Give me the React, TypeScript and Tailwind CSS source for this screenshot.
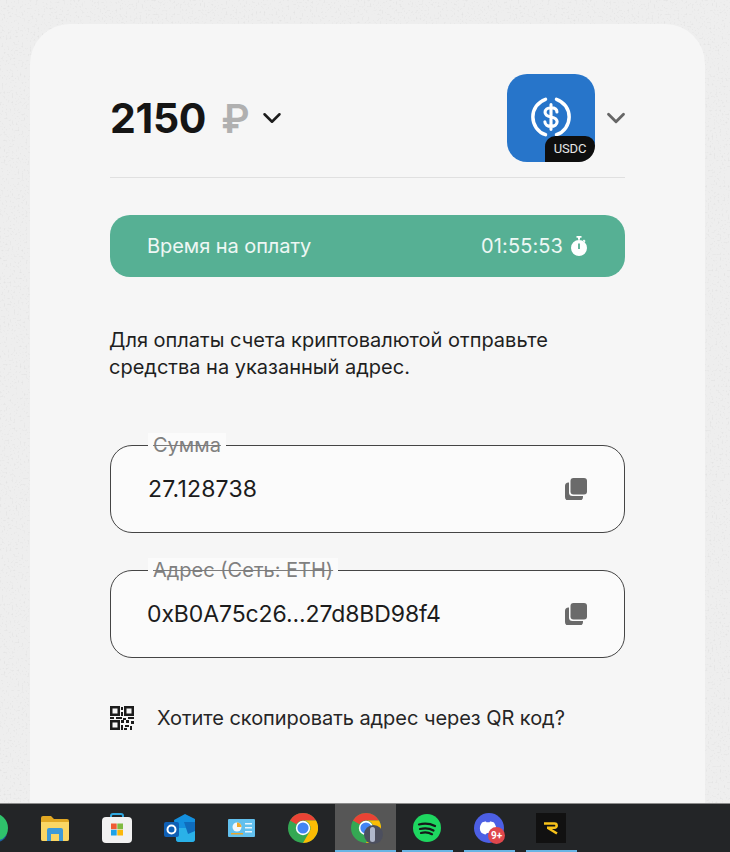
import React from "react";

const Chevron = ({ color, w, sw }: { color: string; w: number; sw: number }) => (
  <svg width={w} height={w} viewBox="0 0 24 24" fill="none" stroke={color} strokeWidth={sw} strokeLinecap="round" strokeLinejoin="round">
    <path d="M3 7.5 12 16.5 21 7.5" />
  </svg>
);

const CopyIcon = () => (
  <svg width="22" height="22" viewBox="0 0 22 22" className="shrink-0">
    <rect x="0" y="4.5" width="18" height="18" rx="3.5" fill="#6a6a6a" />
    <rect x="4" y="-1" width="19" height="19" rx="3.5" fill="#fbfbfb" />
    <rect x="5.5" y="0" width="16.5" height="16.5" rx="3" fill="#6a6a6a" />
  </svg>
);

const Qr = () => (
  <svg width="24" height="24" viewBox="0 0 24 24" fill="#1c1c1c" className="shrink-0">
    <path fillRule="evenodd" d="M0 0h10v10H0zM2.500 2.500v5h5v-5zM14 0h10v10H14zM16.500 2.500v5h5v-5zM0 14h10v10H0zM2.500 16.500v5h5v-5z" />
    <path d="M11 1h2v3h-2zM11 6h2v4h-2zM0 11h4v2H0zM6 11h6v2H6zM13 12h3v2h-3zM18 11h6v2h-6zM11 14h3v3h-3zM16 14h3v3h-3zM21 15h3v3h-3zM11 19h2v5h-2zM15 19h4v2h-4zM14 22h3v2h-3zM20 20h2v4h-2z" />
  </svg>
);

const Field = ({ label, value, track }: { label: string; value: string; track: string }) => (
  <div className="relative h-[88px] rounded-[22px] border border-[#454545] bg-[#fbfbfb] flex items-center justify-between pl-[37px] pr-[37px]">
    <span className={`text-[23px] text-[#1c1c1c] ${track}`}>{value}</span>
    <CopyIcon />
    <span className="absolute left-[37px] -top-[13px] h-[25px] px-[5px] bg-[#fbfbfb] text-[20px] leading-[25px] text-[#808080] line-through decoration-[#7c7c7c] decoration-1">
      {label}
    </span>
  </div>
);

const Chrome = () => (
  <svg width="30" height="30" viewBox="0 0 30 30">
    <circle cx="15" cy="15" r="15" fill="#34a853" />
    <path d="M15 0a15 15 0 0 1 13 7.5H15a7.5 7.5 0 0 0-6.5 3.75L2 7.5A15 15 0 0 1 15 0z" fill="#ea4335" />
    <path d="M28 7.5A15 15 0 0 1 15 30l6.5-11.25A7.5 7.5 0 0 0 15 7.5z" fill="#fbbc04" />
    <circle cx="15" cy="15" r="7.2" fill="#fff" />
    <circle cx="15" cy="15" r="5.6" fill="#4285f4" />
  </svg>
);

const TaskIcon = ({ children, active, bar }: { children: React.ReactNode; active?: boolean; bar?: boolean }) => (
  <div className={`relative h-full shrink-0 flex items-center justify-center ${active ? "ml-[1px] w-[61px] bg-[#565656]" : "w-[62px]"}`}>
    {children}
    {bar && (
      <span className={`absolute bottom-0 h-[2px] bg-[#69b4e4] ${active ? "left-0 right-0" : "left-[6px] right-[5px]"}`} />
    )}
  </div>
);

export default function App() {
  return (
    <div className="relative w-[730px] h-[852px] overflow-hidden flex flex-col bg-[#eeeeee] font-['Inter',sans-serif]">
      <svg className="absolute inset-0 w-full h-full" aria-hidden="true">
        <filter id="speckle">
          <feTurbulence type="fractalNoise" baseFrequency="0.5" numOctaves="2" seed="4" />
          <feColorMatrix values="0 0 0 0 0.6  0 0 0 0 0.6  0 0 0 0 0.6  3 0 0 0 -1.7" />
        </filter>
        <rect width="100%" height="100%" filter="url(#speckle)" opacity="0.4" />
      </svg>

      <main className="relative flex-1 min-h-0 pt-[24px] pl-[30px] pr-[25px]">
        <div className="h-full rounded-t-[40px] bg-[#f6f6f6] px-[80px] pt-[50px]">
          <header className="flex items-center justify-between h-[104px] pb-[15px] border-b border-[#e0e0e0]">
            <div className="flex items-center">
              <span className="text-[41px] font-bold leading-none text-[#151515] tracking-[-0.3px]">2150</span>
              <span className="ml-[15px] text-[39px] font-semibold leading-none text-[#b0b0b0]">₽</span>
              <span className="ml-[12px] flex"><Chevron color="#1c1c1c" w={20} sw={3} /></span>
            </div>
            <div className="flex items-center -mr-[1px]">
              <div className="relative w-[88px] h-[88px] rounded-[20px] bg-[#2775ca] flex items-center justify-center">
                <svg width="42" height="42" viewBox="0 0 46 46" fill="none" stroke="#fff" className="mb-[3px]">
                  <path d="M17 3.6A20.5 20.5 0 0 0 17 42.4M29 3.6A20.5 20.5 0 0 1 29 42.4" strokeWidth="3.8" strokeLinecap="round" />
                  <path d="M29.5 17.5c0-3-2.7-4.700-6.500-4.700s-6.500 1.900-6.500 5c0 3.500 3 4.500 6.500 5.200s6.700 1.800 6.700 5.300c0 3.100-2.900 5-6.700 5s-6.700-1.900-6.700-5M23 9.500v27" strokeWidth="3.4" strokeLinecap="round" />
                </svg>
                <span className="absolute right-0 bottom-0 w-[50px] h-[26px] rounded-tl-[13px] rounded-br-[20px] rounded-tr-[12px] bg-[#0e0e0e] text-white/90 text-[13px] leading-[26px] text-center font-['Roboto',sans-serif] tracking-[-0.1px]">
                  USDC
                </span>
              </div>
              <span className="ml-[11px] flex"><Chevron color="#666666" w={20} sw={3.4} /></span>
            </div>
          </header>

          <div className="mt-[37px] h-[62px] rounded-[20px] bg-[#56b094] flex items-center justify-between pl-[37px] pr-[38px] text-white/90 text-[20px]">
            <span className="tracking-[-0.06px]">Время на оплату</span>
            <span className="flex items-center gap-[8px]">
              <span className="tracking-[0.1px]">01:55:53</span>
              <svg width="16" height="20" viewBox="0 0 16 20" fill="#fff">
                <path d="M5.5 0h5v1.800H9v2H7v-2H5.500z" />
                <path d="m13 3.600 1.600 1.500-1.200 1.200-1.600-1.500z" />
                <path fillRule="evenodd" d="M8 4a8 8 0 1 1 0 16A8 8 0 0 1 8 4zm-.9 3.500V13h1.800V7.500z" />
              </svg>
            </span>
          </div>

          <p className="mt-[50px] -ml-[1px] text-[20px] leading-[27px] text-[#1f1f1f]">
            Для оплаты счета криптовалютой отправьте<br />средства на указанный адрес.
          </p>

          <div className="mt-[64px] flex flex-col gap-[37px]">
            <Field label="Сумма" value="27.128738" track="tracking-[0.2px]" />
            <Field label="Адрес (Сеть: ETH)" value="0xB0A75c26...27d8BD98f4" track="tracking-[-0.1px] -ml-[1px]" />
          </div>

          <div className="mt-[45px] flex items-center gap-[23px]">
            <Qr />
            <span className="text-[20px] text-[#262626] tracking-[-0.05px]">Хотите скопировать адрес через QR код?</span>
          </div>
        </div>
      </main>

      <footer className="relative h-[49px] shrink-0 bg-[#232527] border-t border-[#8c8c8c] flex items-center pl-[24px] overflow-hidden">
        <svg width="30" height="30" viewBox="0 0 30 30" className="absolute -left-[22px] top-[9px]">
          <circle cx="15" cy="15" r="15" fill="#2fc26b" />
          <path d="M20 27c3 0 6-1 9-6-1 5-7 9-14 9z" fill="#1b5fa8" />
        </svg>
        <TaskIcon>
          <svg width="28" height="26" viewBox="0 0 28 26">
            <path d="M0 3a2 2 0 0 1 2-2h8l3 3h13a2 2 0 0 1 2 2v18a2 2 0 0 1-2 2H2a2 2 0 0 1-2-2z" fill="#e2a823" />
            <path d="M0 7h28v17a2 2 0 0 1-2 2H2a2 2 0 0 1-2-2z" fill="#fbd664" />
            <path d="M6 15a2 2 0 0 1 2-2h12a2 2 0 0 1 2 2v11h-4v-7h-8v7H6z" fill="#3e9ad8" />
          </svg>
        </TaskIcon>
        <TaskIcon>
          <svg width="30" height="30" viewBox="0 0 30 30">
            <path d="M9 7V3a2 2 0 0 1 2-2h8a2 2 0 0 1 2 2v4" fill="none" stroke="#2fa8e0" strokeWidth="2" />
            <rect y="4" width="30" height="26" rx="4" fill="#f1f1f1" />
            <rect x="9" y="10.500" width="5.700" height="5.700" fill="#ef5a33" />
            <rect x="15.300" y="10.500" width="5.700" height="5.700" fill="#7fbb42" />
            <rect x="9" y="16.800" width="5.700" height="5.700" fill="#1fa3e8" />
            <rect x="15.300" y="16.800" width="5.700" height="5.700" fill="#fbb80a" />
          </svg>
        </TaskIcon>
        <TaskIcon>
          <svg width="31" height="28" viewBox="0 0 31 28">
            <path d="M10 6 21 0l10 5v20a3 3 0 0 1-3 3H15a3 3 0 0 1-3-3z" fill="#1490df" />
            <path d="M12 14h19v11a3 3 0 0 1-3 3H15a3 3 0 0 1-3-3z" fill="#2ab1e8" />
            <path d="M20 8h11v9l-7 3z" fill="#0f6cbd" />
            <rect y="8" width="15" height="15" rx="2" fill="#0f5fb4" />
            <circle cx="7.500" cy="15.500" r="4" fill="none" stroke="#fff" strokeWidth="2" />
          </svg>
        </TaskIcon>
        <TaskIcon>
          <svg width="27" height="18" viewBox="0 0 27 18">
            <rect width="27" height="18" rx="1" fill="#62c0ee" />
            <circle cx="9" cy="8" r="4.500" fill="#f3f7fa" />
            <path d="M9 8V3.500A4.500 4.500 0 0 1 13.500 8z" fill="#f0a92c" />
            <path d="M3 14h12v1.500H3z" fill="#eaa62d" />
            <path d="M17 4h7v1.500h-7zM17 8h7v1.500h-7zM17 12h7v1.500h-7z" fill="#e7f5fc" />
          </svg>
        </TaskIcon>
        <TaskIcon><Chrome /></TaskIcon>
        <TaskIcon active bar>
          <div className="relative">
            <Chrome />
            <span className="absolute left-[13px] top-[12px] w-[19px] h-[19px] rounded-full bg-[#4c4f5e]" />
            <span className="absolute left-[19px] top-[14px] w-[5px] h-[15px] rounded-sm bg-[#b0b8cc]" />
          </div>
        </TaskIcon>
        <TaskIcon bar>
          <svg width="28" height="28" viewBox="0 0 28 28" fill="none">
            <circle cx="14" cy="14" r="14" fill="#1ed760" />
            <path d="M6 10.500c5.500-1.500 11-1 16 1.500M7 15c4.500-1.200 9.500-.8 13.500 1.500M8 19c4-1 7.800-.6 11 1.200" stroke="#16181a" strokeWidth="2.200" strokeLinecap="round" />
          </svg>
        </TaskIcon>
        <TaskIcon bar>
          <div className="relative w-[30px] h-[30px] rounded-full bg-[#4c5fe4] flex items-center justify-center">
            <svg width="18" height="14" viewBox="0 0 18 14" className="mr-[3px]">
              <path d="M3 1.500C5 .7 6 .5 7 .5l.4.800h3.200L11 .5c1 0 2 .2 4 1 2 3 3 6.500 2.800 10-1.500 1.100-3 1.800-4.300 2l-1-1.600-4.500.2-1.500 1.400c-1.300-.2-3-.9-4.300-2C-.2 8 1 4.500 3 1.500z" fill="#fff" />
            </svg>
            <span className="absolute -right-[1px] -bottom-[1px] w-[17px] h-[17px] rounded-full bg-[#e0474c] text-white text-[10px] leading-[17px] text-center font-bold font-['Roboto',sans-serif]">9+</span>
          </div>
        </TaskIcon>
        <TaskIcon bar>
          <div className="w-[30px] h-[30px] bg-[#111111] flex items-center justify-center">
            <svg width="14" height="13" viewBox="0 0 14 13" fill="none" stroke="#f7c21a" strokeWidth="2.600">
              <path d="M0 1.500h10.500a1.700 1.700 0 0 1 0 4.300H3M4 6l9 5.500" />
            </svg>
          </div>
        </TaskIcon>
      </footer>
    </div>
  );
}
